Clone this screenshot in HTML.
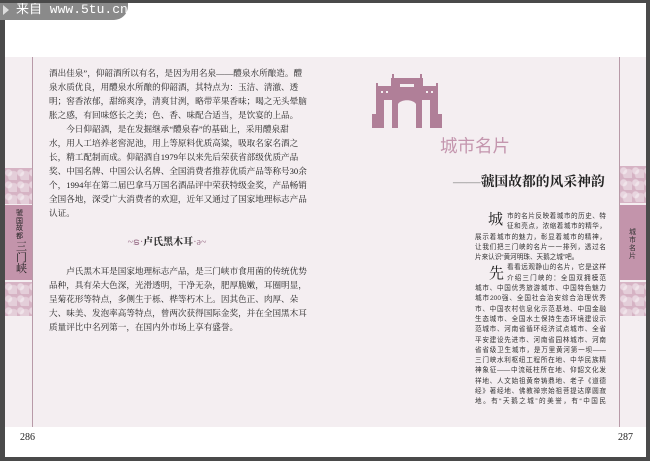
<!DOCTYPE html>
<html><head><meta charset="utf-8"><style>
*{margin:0;padding:0;box-sizing:border-box}
body{width:650px;height:461px;overflow:hidden;background:#4a4a4a;position:relative;font-family:"Liberation Serif","Noto Serif CJK SC",serif}
.page{position:absolute;left:5px;top:3px;width:641px;height:454px;background:#fff}
.pink{position:absolute;left:5px;top:57px;width:641px;height:370px;background:#f4eef1}
.vl{position:absolute;top:57px;height:370px;width:1px;background:#b89aa8}
.pat{position:absolute;background:#d6b3c4;background-image:radial-gradient(circle at 30% 40%,rgba(255,255,255,.45) 0 3px,transparent 4px),radial-gradient(circle at 70% 70%,rgba(255,255,255,.35) 0 5px,transparent 6px);background-size:12px 12px}
.lab{position:absolute;background:#c394ab}
.t{position:absolute;left:49px;width:235px;font-size:8.6px;line-height:14px;color:#222;font-family:"Liberation Serif","Noto Serif CJK SC",serif}
.t div{white-space:nowrap;text-align:justify;text-align-last:justify;height:14px}
.t div.e{text-align-last:left}
.r{position:absolute;left:475px;width:131px;font-size:6.6px;line-height:10.3px;color:#333;font-family:"Liberation Sans","Noto Sans CJK SC",sans-serif}
.r div{white-space:nowrap;text-align:justify;text-align-last:justify;height:10.3px}
.r div.e{text-align-last:left}
</style></head><body>
<div class="page"></div>
<div class="pink"></div>
<div class="vl" style="left:32px"></div>
<div class="vl" style="left:619px"></div>
<div class="pat" style="left:5px;top:168px;width:27px;height:36px"></div>
<div class="lab" style="left:5px;top:205px;width:27px;height:75px"></div>
<div class="pat" style="left:5px;top:282px;width:27px;height:34px"></div>
<div style="position:absolute;left:16px;top:210px;width:8px;font-size:7px;line-height:7.5px;color:#222;font-family:'Noto Sans CJK SC',sans-serif">虢国故都</div>
<div style="position:absolute;left:16px;top:242px;width:12px;font-size:11px;line-height:11px;color:#222">三门峡</div>
<div class="pat" style="left:620px;top:166px;width:26px;height:37px"></div>
<div class="lab" style="left:620px;top:205px;width:26px;height:75px"></div>
<div class="pat" style="left:620px;top:282px;width:26px;height:34px"></div>
<div style="position:absolute;left:629px;top:228px;width:8px;font-size:7px;line-height:8px;color:#333;font-family:'Noto Sans CJK SC',sans-serif">城市名片</div>

<div style="position:absolute;left:0;top:0;width:128px;height:20px;background:#8a8a8a;border-radius:0 0 14px 0;color:#fff;font-size:13px;line-height:20px;padding-left:16px;font-family:'Liberation Mono','Noto Sans CJK SC',monospace">来自 www.5tu.cn</div>
<div style="position:absolute;left:3px;top:5px;border-left:6px solid #ddd;border-top:5px solid transparent;border-bottom:5px solid transparent"></div>

<div class="t" style="top:66px">
<div>酒出佳泉”，仰韶酒所以有名，是因为用名泉——醴泉水所酿造。醴</div>
<div>泉水质优良，用醴泉水所酿的仰韶酒，其特点为：玉洁、清澈、透</div>
<div>明；窖香浓郁，甜绵爽净，清爽甘洌，略带苹果香味；喝之无头晕脑</div>
<div class="e">胀之感，有回味悠长之美；色、香、味配合适当，是饮宴的上品。</div>
<div>　　今日仰韶酒，是在发掘继承“醴泉春”的基础上，采用醴泉甜</div>
<div>水，用人工培养老窖泥池，用上等原料优质高粱，吸取名家名酒之</div>
<div>长，精工配制而成。仰韶酒自1979年以来先后荣获省部级优质产品</div>
<div>奖、中国名牌、中国公认名牌、全国消费者推荐优质产品等称号30余</div>
<div>个，1994年在第二届巴拿马万国名酒品评中荣获特级金奖，产品畅销</div>
<div>全国各地，深受广大消费者的欢迎，近年又通过了国家地理标志产品</div>
<div class="e">认证。</div>
</div>
<div style="position:absolute;left:120px;top:233px;width:94px;text-align:center;font-size:10px;font-weight:bold;color:#222;white-space:nowrap"><span style="color:#a07890;font-weight:normal">~ຣ·</span>卢氏黑木耳<span style="color:#a07890;font-weight:normal">·ə~</span></div>
<div class="t" style="top:264px">
<div>　　卢氏黑木耳是国家地理标志产品，是三门峡市食用菌的传统优势</div>
<div>品种，具有朵大色深，光滑透明，干净无杂，肥厚脆嫩，耳圈明显，</div>
<div>呈菊花形等特点，多侧生于栎、桦等朽木上。因其色正、肉厚、朵</div>
<div>大、味美、发泡率高等特点，曾两次获得国际金奖，并在全国黑木耳</div>
<div class="e">质量评比中名列第一，在国内外市场上享有盛誉。</div>
</div>

<svg style="position:absolute;left:370px;top:74px" width="74" height="54" viewBox="0 0 74 54"><g fill="#b07f98"><rect x="21" y="4" width="32" height="16"/><rect x="22" y="0" width="2" height="6"/><rect x="50" y="0" width="2" height="6"/><rect x="6" y="12" width="18" height="14"/><rect x="50" y="12" width="18" height="14"/><rect x="6" y="9" width="2" height="4"/><rect x="66" y="9" width="2" height="4"/><rect x="6" y="26" width="8" height="28"/><rect x="60" y="26" width="8" height="28"/><rect x="2" y="40" width="12" height="14"/><rect x="60" y="40" width="12" height="14"/><rect x="22" y="20" width="6" height="34"/><rect x="46" y="20" width="6" height="34"/><path d="M28 20h18v10c-3-5-15-5-18 0z"/></g><g fill="#f4eef1"><rect x="11" y="17" width="2" height="2"/><rect x="16" y="17" width="2" height="2"/><rect x="56" y="17" width="2" height="2"/><rect x="61" y="17" width="2" height="2"/><rect x="30" y="10" width="14" height="3"/></g></svg>
<div style="position:absolute;left:440px;top:133px;font-size:17.5px;color:#c496ae;font-family:'Liberation Sans','Noto Sans CJK SC',sans-serif;white-space:nowrap">城市名片</div>
<div style="position:absolute;left:453px;top:170px;font-size:13.8px;font-weight:bold;color:#222;white-space:nowrap"><span style="font-weight:normal;color:#888">——</span>虢国故都的风采神韵</div>

<div style="position:absolute;left:488px;top:212px;font-size:15px;line-height:16px;color:#222">城</div>
<div style="position:absolute;left:489px;top:266px;font-size:15px;line-height:16px;color:#222">先</div>
<div class="r" style="top:212px">
<div style="margin-left:32px">市的名片反映着城市的历史、特</div>
<div style="margin-left:32px">征和亮点，浓缩着城市的精华，</div>
<div>展示着城市的魅力，彰显着城市的精神，</div>
<div>让我们把三门峡的名片一一排列，透过名</div>
<div class="e">片来认识“黄河明珠、天鹅之城”吧。</div>
<div style="margin-left:32px">看看远观静山的名片，它是这样</div>
<div style="margin-left:32px">介绍三门峡的：全国双拥模范</div>
<div>城市、中国优秀旅游城市、中国特色魅力</div>
<div>城市200强、全国社会治安综合治理优秀</div>
<div>市、中国农村信息化示范基地、中国金融</div>
<div>生态城市、全国水土保持生态环境建设示</div>
<div>范城市、河南省循环经济试点城市、全省</div>
<div>平安建设先进市、河南省园林城市、河南</div>
<div>省省级卫生城市，是万里黄河第一坝——</div>
<div>三门峡水利枢纽工程所在地、中华民族精</div>
<div>神象征——中流砥柱所在地、仰韶文化发</div>
<div>祥地、人文始祖黄帝铸鼎地、老子《道德</div>
<div>经》著经地、佛教禅宗始祖菩提达摩圆寂</div>
<div>地。有“天鹅之城”的美誉，有“中国民</div>
</div>

<div style="position:absolute;left:20px;top:432px;font-size:10px;color:#222">286</div>
<div style="position:absolute;left:618px;top:432px;font-size:10px;color:#222">287</div>
<div style="position:absolute;left:0;top:0;width:650px;height:3px;background:#4a4a4a"></div>
</body></html>
